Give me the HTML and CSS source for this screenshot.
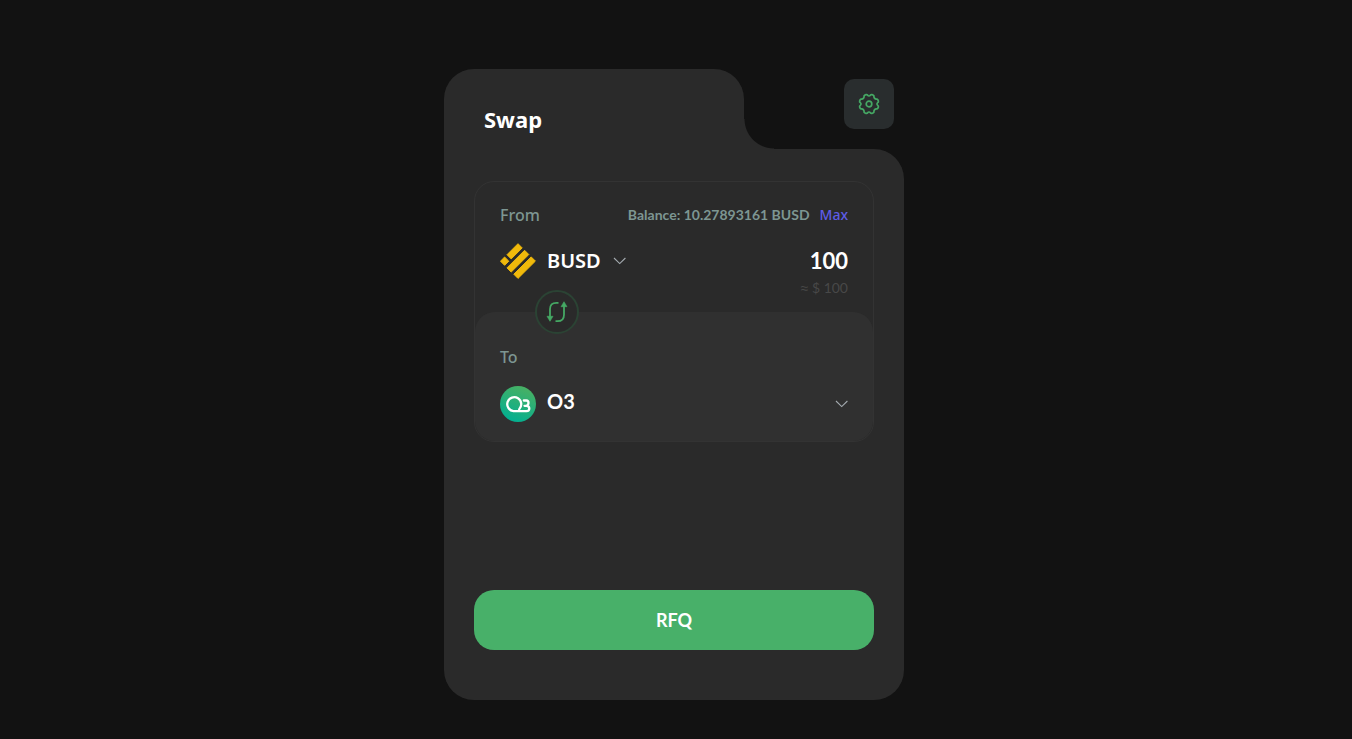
FILE: index.html
```html
<!DOCTYPE html>
<html lang="en">
<head>
<meta charset="utf-8">
<meta name="viewport" content="width=device-width, initial-scale=1">
<title>Swap</title>
<link rel="stylesheet" href="styles.css">
</head>
<body>
<main class="page">
  <section class="swap">
    <header class="swap-head">
      <div class="tab"><h1 class="title">Swap</h1></div>
      <button class="settings" type="button" aria-label="Settings">
        <svg width="22" height="22" viewBox="0 0 22 22" fill="none" stroke="#45a864" stroke-width="1.7" stroke-linejoin="round">
          <path d="M8.1 1.6 Q9.1 1.4 9.5 2.2 Q11 3.8 12.5 2.2 Q12.9 1.4 13.9 1.6 L15.4 2.2 Q16.2 2.7 15.9 3.6 Q16.1 5.9 18.4 6.1 Q19.3 5.8 19.8 6.6 L20.4 8.1 Q20.6 9.1 19.8 9.5 Q18.2 11 19.8 12.5 Q20.6 12.9 20.4 13.9 L19.8 15.4 Q19.3 16.2 18.4 15.9 Q16.1 16.1 15.9 18.4 Q16.2 19.3 15.4 19.8 L13.9 20.4 Q12.9 20.6 12.5 19.8 Q11 18.2 9.5 19.8 Q9.1 20.6 8.1 20.4 L6.6 19.8 Q5.8 19.3 6.1 18.4 Q5.9 16.1 3.6 15.9 Q2.7 16.2 2.2 15.4 L1.6 13.9 Q1.4 12.9 2.2 12.5 Q3.8 11 2.2 9.5 Q1.4 9.1 1.6 8.1 L2.2 6.6 Q2.7 5.8 3.6 6.1 Q5.9 5.9 6.1 3.6 Q5.8 2.7 6.6 2.2 Z"/>
          <circle cx="11" cy="11" r="2.8"/>
        </svg>
      </button>
    </header>
    <div class="swap-body">
      <div class="pair">
        <div class="side side-from">
          <div class="row labels">
            <label class="label" for="amount">From</label>
            <div class="balance"><span>Balance: 10.27893161 BUSD</span><button class="max" type="button">Max</button></div>
          </div>
          <div class="row">
            <button class="token" type="button">
              <svg width="36" height="36" viewBox="0 0 36 36" fill="#f0b90b" stroke="#f0b90b" stroke-width="1" stroke-linejoin="round">
                <path d="M18 .7 22.2 4.9 11.2 15.9 7 11.7Z"/>
                <path d="M24.6 7.3 28.8 11.5 11.2 29.1 7 24.9Z"/>
                <path d="M31.2 13.9 35.4 18.1 18 35.4 13.8 31.2Z"/>
                <path d="M4.6 14 8.8 18.2 4.6 22.3 .5 18.2Z"/>
              </svg>
              <span>BUSD</span>
              <svg class="chevron" width="14" height="8" viewBox="0 0 14 8" fill="none" stroke="#a4abb0" stroke-width="1.1"><path d="M2 1 7.7 6.6 13.4 1"/></svg>
            </button>
            <input class="amount" id="amount" type="text" value="100">
          </div>
          <p class="fiat"><span class="approx">≈</span> $ 100</p>
        </div>
        <div class="side side-to">
          <button class="switch" type="button" aria-label="Switch tokens">
            <svg width="22" height="22" viewBox="0 0 22 22" fill="none" stroke="#45a864" stroke-width="1.8">
              <path d="M12.5 1.8H10.5Q4 1.8 4 8.3V17M9.5 20.2h2q6.5 0 6.5-6.5V5"/>
              <path d="M1 15.3h6L4 20.3ZM15 5.7h6L18 .7Z" fill="#45a864" stroke-width=".6" stroke-linejoin="round"/>
            </svg>
          </button>
          <p class="label">To</p>
          <button class="token token-wide" type="button">
            <svg width="36" height="36" viewBox="0 0 36 36">
              <defs><linearGradient id="o3" x1=".7" y1="0" x2=".3" y2="1"><stop offset="0" stop-color="#4ab062"/><stop offset="1" stop-color="#00af92"/></linearGradient></defs>
              <circle cx="18" cy="18" r="18" fill="url(#o3)"/>
              <g fill="none" stroke="#fff" stroke-width="2.3" stroke-linecap="round" stroke-linejoin="round">
                <path d="M19.2 23.2A7 7 0 1 0 13.5 25.2H26.5Q29.3 25 29.3 22.4 29.3 20 26.5 19.8H24.5M23.8 14.5H26.3Q28.5 14.6 28.5 17 28.4 19.3 26 19.8"/>
              </g>
            </svg>
            <span class="token-name">O3</span>
            <svg class="chevron" width="14" height="8" viewBox="0 0 14 8" fill="none" stroke="#a4abb0" stroke-width="1.1"><path d="M2 1 7.7 6.6 13.4 1"/></svg>
          </button>
        </div>
      </div>
      <button class="submit" type="button">RFQ</button>
    </div>
  </section>
</main>
</body>
</html>
```
FILE: styles.css
```css
* { box-sizing: border-box; }

body {
  margin: 0;
  background: #121212;
  color: #fff;
  font-family: Lato, "Noto Sans", sans-serif;
  font-size: 16px;
}

button, input {
  margin: 0;
  padding: 0;
  border: 0;
  background: none;
  color: inherit;
  font: inherit;
}

button { cursor: pointer; }
svg { display: block; flex: none; }
p, h1 { margin: 0; }

.page {
  display: flex;
  justify-content: center;
  min-height: 100vh;
  padding: 69px 4px 39px 0;
}

.swap {
  display: flex;
  flex-direction: column;
  width: 100%;
  max-width: 460px;
}

.swap-head {
  display: flex;
  justify-content: space-between;
  align-items: flex-start;
  padding-right: 10px;
}

.tab {
  position: relative;
  width: 300px;
  padding: 35px 40px 15px;
  border-radius: 30px 30px 0 0;
  background: #2a2a2a;
}

/* concave corner between the tab and the card */
.tab::after {
  content: "";
  position: absolute;
  left: 100%;
  bottom: 0;
  width: 30px;
  height: 30px;
  background: radial-gradient(circle at 100% 0, transparent 29px, #2a2a2a 30px);
}

.title {
  font-family: "Noto Sans", sans-serif;
  font-size: 22px;
  font-weight: 700;
  line-height: 30px;
}

.settings {
  display: grid;
  place-items: center;
  width: 50px;
  height: 50px;
  margin-top: 10px;
  border-radius: 10px;
  background: #292d2e;
}

.swap-body {
  display: flex;
  flex: 1;
  flex-direction: column;
  justify-content: space-between;
  gap: 30px;
  padding: 32px 30px 50px;
  border-radius: 0 30px 30px 30px;
  background: #2a2a2a;
}

.pair {
  border: 1px solid #333;
  border-radius: 20px;
}

.side { padding: 0 25px; }

.side-from { padding-top: 21px; padding-bottom: 15px; }

.side-to {
  position: relative;
  padding-top: 34px;
  padding-bottom: 19px;
  border-radius: 20px;
  background: #303030;
}

.row {
  display: flex;
  align-items: center;
  justify-content: space-between;
}

.labels { margin-bottom: 16px; }

.label {
  color: #7d9692;
  font-family: "Noto Sans", sans-serif;
  font-weight: 500;
  line-height: 22px;
}

.balance {
  display: flex;
  gap: 10px;
  color: #7d9692;
  font-size: 14px;
  font-weight: 700;
  line-height: 24px;
}

.max {
  color: #5e5ce6;
  font-family: "Noto Sans", sans-serif;
  font-weight: 500;
}

.token {
  display: flex;
  align-items: center;
  gap: 11px;
  font-family: "Noto Sans", sans-serif;
  font-size: 20px;
  font-weight: 600;
  line-height: 36px;
}

.token-wide { width: 100%; margin-top: 18px; }
.token-wide .chevron { margin-left: auto; }

.token-name {
  align-self: flex-start;
  font-family: Lato, sans-serif;
  font-weight: 700;
  line-height: 30px;
}

.amount {
  width: 120px;
  font-size: 22px;
  font-weight: 700;
  line-height: 36px;
  text-align: right;
  outline: 0;
}

.fiat {
  color: #484848;
  font-size: 14px;
  line-height: 18px;
  text-align: right;
}

.approx { font-family: "Noto Sans", sans-serif; }

.switch {
  position: absolute;
  top: -22px;
  left: 60px;
  display: grid;
  place-items: center;
  width: 44px;
  height: 44px;
  border: 2px solid #2b4334;
  border-radius: 50%;
  background: #2a2a2a;
}

.submit {
  width: 100%;
  height: 60px;
  border-radius: 20px;
  background: #48b069;
  font-size: 18px;
  font-weight: 700;
}
```
